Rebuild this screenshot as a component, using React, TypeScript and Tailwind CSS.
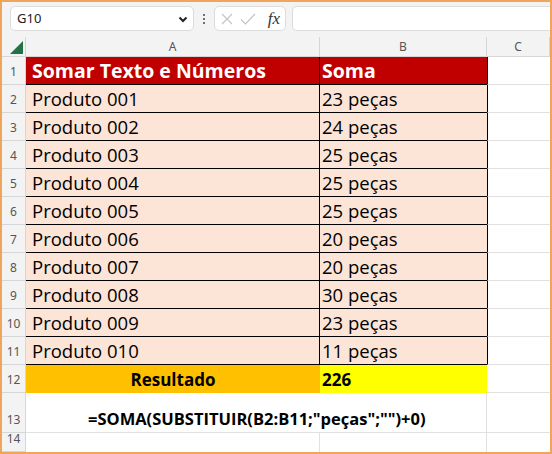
import React from 'react';

const rows: [string, string][] = [
  ['Produto 001', '23 peças'],
  ['Produto 002', '24 peças'],
  ['Produto 003', '25 peças'],
  ['Produto 004', '25 peças'],
  ['Produto 005', '25 peças'],
  ['Produto 006', '20 peças'],
  ['Produto 007', '20 peças'],
  ['Produto 008', '30 peças'],
  ['Produto 009', '23 peças'],
  ['Produto 010', '11 peças'],
];

const cell = "font-['Open_Sans',sans-serif] leading-[26px] text-black";

const RowHead = ({ n, h = 'h-[28px]' }: { n: number; h?: string }) => (
  <div className={`${h} flex items-end justify-center pb-[3px] border-b border-r border-[#d6d6d6] bg-[#f3f3f3] text-[12px] text-[#555] font-['Noto_Sans',sans-serif]`}>
    {n}
  </div>
);

export default function App() {
  return (
    <div className="w-[552px] h-[454px] border-2 border-[#efa65c] bg-white overflow-hidden flex flex-col">
      {/* formula bar */}
      <div className="h-[35px] bg-[#f3f3f3] flex items-center gap-[6px] pl-[8px] pb-[2px] font-['Noto_Sans',sans-serif]">
        <div className="w-[184px] h-[25px] bg-white border border-[#dcdcdc] rounded-[5px] flex items-center justify-between pl-[6px] pr-[4px] text-[13px] text-[#222]">
          <span>G10</span>
          <svg width="12" height="12" viewBox="0 0 12 12" fill="none" stroke="#222" strokeWidth="2"><path d="M2.5 4.5 6 8l3.5-3.5" /></svg>
        </div>
        <div className="flex flex-col gap-[2px] px-[3px]">
          <span className="w-[2px] h-[2px] bg-[#444] rounded-full" />
          <span className="w-[2px] h-[2px] bg-[#444] rounded-full" />
          <span className="w-[2px] h-[2px] bg-[#444] rounded-full" />
        </div>
        <div className="w-[72px] h-[25px] bg-white border border-[#dcdcdc] rounded-[5px] flex items-center gap-[6px] px-[5px]">
          <svg width="14" height="14" viewBox="0 0 14 14" stroke="#c4c4c4" strokeWidth="1.2"><path d="M2 2l10 10M12 2 2 12" /></svg>
          <svg width="16" height="14" viewBox="0 0 16 14" fill="none" stroke="#c4c4c4" strokeWidth="1.2"><path d="M1 7.5 5.5 12 15 2" /></svg>
          <span className="ml-auto font-['Liberation_Serif',serif] italic text-[17px] text-[#333] leading-none">fx</span>
        </div>
        <div className="flex-1 h-[25px] bg-white border border-[#dcdcdc] rounded-l-[5px] border-r-0" />
      </div>

      {/* grid */}
      <div className="grid grid-cols-[24px_294px_167px_1fr]">
        {/* column headers */}
        <div className="h-[20px] bg-[#f3f3f3] border-b border-r border-[#d6d6d6] flex items-end justify-end p-[2px]">
          <svg width="13" height="13" viewBox="0 0 13 13"><path d="M13 0V13H0Z" fill="#217346" /></svg>
        </div>
        {['A', 'B', 'C'].map((c) => (
          <div key={c} className="h-[20px] bg-[#f3f3f3] border-b border-r border-[#d6d6d6] flex items-center justify-center text-[12px] text-[#555] font-['Noto_Sans',sans-serif]">
            {c}
          </div>
        ))}

        {/* row 1 */}
        <RowHead n={1} />
        <div className={`${cell} text-[19.5px] h-[28px] bg-[#c00000] !text-white font-bold flex items-end pl-[6px] border-b border-r border-black`}>
          Somar Texto e Números
        </div>
        <div className={`${cell} text-[19.5px] h-[28px] bg-[#c00000] !text-white font-bold flex items-end pl-[2px] border-b border-black`}>
          Soma
        </div>
        <div className="h-[28px] border-b border-[#e1e1e1] border-l border-l-black" />

        {rows.map(([a, b], i) => (
          <React.Fragment key={a}>
            <RowHead n={i + 2} />
            <div className={`${cell} text-[18.5px] h-[28px] bg-[#fce4d6] flex items-end pl-[6px] border-b border-r border-black`}>{a}</div>
            <div className={`${cell} text-[18.5px] h-[28px] bg-[#fce4d6] flex items-end pl-[2px] border-b border-black`}>{b}</div>
            <div className="h-[28px] border-b border-[#e1e1e1] border-l border-l-black" />
          </React.Fragment>
        ))}

        {/* row 12 */}
        <RowHead n={12} />
        <div className={`${cell} text-[17px] h-[28px] bg-[#ffc000] font-bold flex items-end justify-center`}>Resultado</div>
        <div className={`${cell} text-[17px] h-[28px] bg-[#ffff00] font-bold flex items-end pl-[2px]`}>226</div>
        <div className="h-[28px] border-b border-[#e1e1e1]" />

        {/* row 13 */}
        <RowHead n={13} h="h-[40px]" />
        <div className="col-span-2 h-[40px] relative border-b border-r border-[#e1e1e1]">
          <span className={`${cell} text-[16.5px] font-bold absolute left-[62px] bottom-0 whitespace-nowrap`}>
            =SOMA(SUBSTITUIR(B2:B11;"peças";"")+0)
          </span>
        </div>
        <div className="h-[40px] border-b border-[#e1e1e1]" />

        {/* row 14 */}
        <RowHead n={14} h="h-[19px]" />
        <div className="h-[19px] border-r border-[#e1e1e1]" />
        <div className="h-[19px] border-r border-[#e1e1e1]" />
        <div className="h-[19px]" />
      </div>
    </div>
  );
}
